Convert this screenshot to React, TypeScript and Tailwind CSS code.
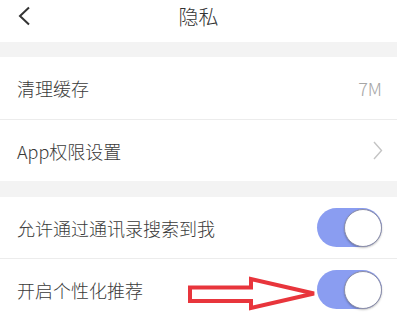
import React from 'react'

type RowProps = {
    label: string
    right?: React.ReactNode
    className?: string
}

const Row: React.FC<RowProps> = ({ label, right, className }) => (
    <div className={`flex items-center justify-between bg-white pl-[17px] pr-[15px] ${className ?? ''}`}>
        <span className="text-[18px] font-light text-[#3a3a3a] leading-none">{label}</span>
        {right}
    </div>
)

const Toggle: React.FC = () => (
    <div className="flex h-[39px] w-[65px] items-center justify-end rounded-full bg-[#8a9df1]">
        <div className="h-[38px] w-[38px] rounded-full border border-[#8d8fa8] bg-white shadow-[0_1px_2px_rgba(0,0,0,0.25)]" />
    </div>
)

const ChevronRight: React.FC = () => (
    <svg width="10" height="19" viewBox="0 0 10 19" className="mr-[-1px]">
        <path d="M1 1 L8.5 9.5 L1 18" fill="none" stroke="#c4c4c4" strokeWidth="1.4" />
    </svg>
)

export default function App() {
    return (
        <div
            className="relative h-[312px] w-[397px] overflow-hidden bg-[#f3f3f3]"
            style={{ fontFamily: '"Noto Sans CJK SC", "Noto Sans", sans-serif' }}
        >
            <div className="relative flex h-[42px] justify-center bg-white pt-[5px]">
                <svg width="14" height="20" viewBox="0 0 14 20" className="absolute left-[17px] top-[6px]">
                    <path d="M12 1.5 L3 10 L12 18.5" fill="none" stroke="#333333" strokeWidth="2" />
                </svg>
                <span className="text-[20px] font-light leading-[24px] text-[#333333]">隐私</span>
            </div>

            <div className="h-[15px]" />

            <Row
                label="清理缓存"
                className="h-[63px] border-b border-[#ececec]"
                right={<span className="text-[18px] font-light leading-none text-[#a6a6a6]">7M</span>}
            />
            <Row label="App权限设置" className="h-[61px]" right={<ChevronRight />} />

            <div className="h-[16px]" />

            <Row label="允许通过通讯录搜索到我" className="h-[62px] border-b border-[#ececec]" right={<Toggle />} />
            <Row label="开启个性化推荐" className="h-[61px]" right={<Toggle />} />

            <svg
                width="397"
                height="312"
                viewBox="0 0 397 312"
                className="pointer-events-none absolute left-0 top-0"
            >
                <polygon
                    points="190,287.5 251,287.5 251,279 314,293.5 251,308 251,301 190,301"
                    fill="none"
                    stroke="#e8353c"
                    strokeWidth="4"
                    strokeLinejoin="miter"
                />
            </svg>
        </div>
    )
}
